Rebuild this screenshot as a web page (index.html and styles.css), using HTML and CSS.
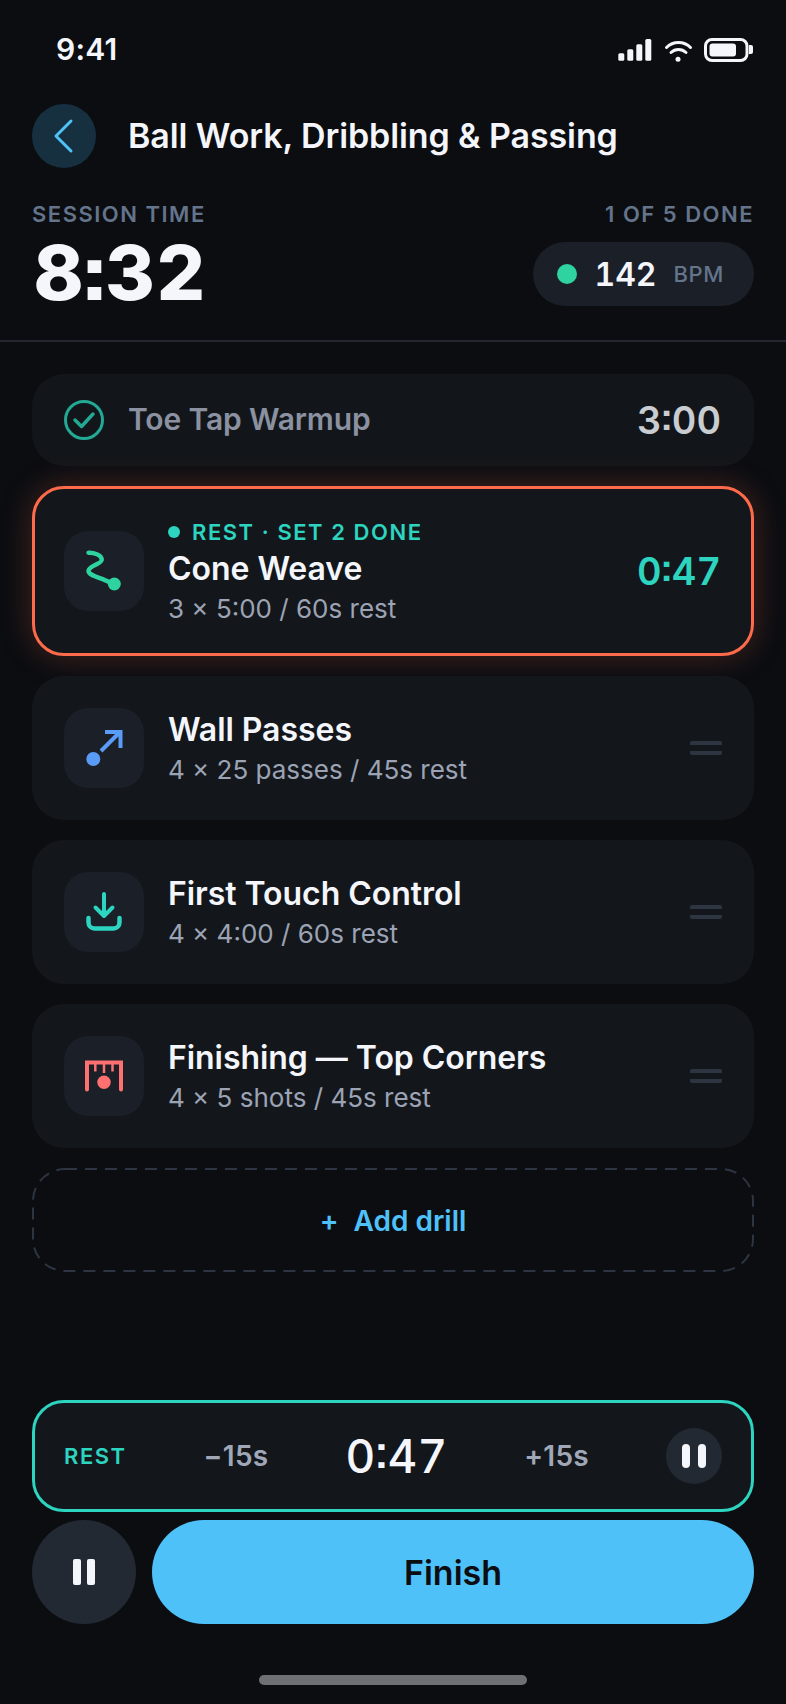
FILE: index.html
```html
<!DOCTYPE html>
<html lang="en">
<head>
<meta charset="utf-8">
<title>Ball Work, Dribbling &amp; Passing</title>
<link rel="stylesheet" href="styles.css">
</head>
<body>
<div class="app">
  <div class="status">
    <span class="clock">9:41</span>
    <svg class="status-icons" width="135" height="24" viewBox="618 38 135 24">
      <rect x="618.3" y="53.3" width="6" height="7.4" rx="1.5" fill="#f4f6fb"/>
      <rect x="627.3" y="49.3" width="6" height="11.4" rx="1.5" fill="#f4f6fb"/>
      <rect x="636.3" y="44.3" width="6" height="16.4" rx="1.5" fill="#f4f6fb"/>
      <rect x="645.3" y="39" width="6" height="21.7" rx="1.5" fill="#f4f6fb"/>
      <path d="M666.5 47.5a17 17 0 0 1 24 0M671 52.5a11 11 0 0 1 15 0" fill="none" stroke="#f4f6fb" stroke-width="3" stroke-linecap="round"/>
      <circle cx="678" cy="59.3" r="2.5" fill="#f4f6fb"/>
      <rect x="705.5" y="39.5" width="41.5" height="21" rx="6.5" fill="none" stroke="#f4f6fb" stroke-width="3"/>
      <rect x="709.5" y="43.5" width="26.5" height="13" rx="3" fill="#f4f6fb"/>
      <path d="M749 45h2a2 2 0 0 1 2 2v5a2 2 0 0 1-2 2h-2z" fill="#f4f6fb"/>
    </svg>
  </div>

  <header class="header">
    <button class="back" aria-label="Back">
      <svg width="64" height="64" viewBox="0 0 64 64"><path d="M39 17 24 32l15 15" fill="none" stroke="#4fc1f9" stroke-width="3" stroke-linecap="round" stroke-linejoin="round"/></svg>
    </button>
    <h1 class="title">Ball Work, Dribbling &amp; Passing</h1>
  </header>

  <section class="stats">
    <div class="stat-col">
      <div class="stat-label">SESSION TIME</div>
      <div class="session-time">8:32</div>
    </div>
    <div class="stat-col stat-right">
      <div class="stat-label">1 OF 5 DONE</div>
      <div class="bpm">
        <span class="bpm-dot"></span>
        <span class="bpm-val">142</span>
        <span class="bpm-unit">BPM</span>
      </div>
    </div>
  </section>

  <main class="list">
    <div class="card done">
      <svg class="check" width="40" height="40" viewBox="0 0 40 40"><circle cx="20" cy="20" r="18.5" fill="none" stroke="#22a893" stroke-width="3"/><path d="m11 20 6.500 6.500L29 14" fill="none" stroke="#22a893" stroke-width="3.500" stroke-linecap="round" stroke-linejoin="round"/></svg>
      <span class="done-name">Toe Tap Warmup</span>
      <span class="done-time">3:00</span>
    </div>

    <div class="card active">
      <div class="icon">
        <svg width="80" height="80" viewBox="0 0 80 80"><path d="M24.500 21.700C29 21.500 38 23.500 37.700 29 37.400 33 24.500 35 24.500 40 24.500 45 38 46.500 46 51.500" fill="none" stroke="#2ed3a0" stroke-width="4.500" stroke-linecap="round"/><circle cx="50.300" cy="53" r="6.500" fill="#2ed3a0"/></svg>
      </div>
      <div class="info">
        <div class="state"><span class="state-dot"></span>REST · SET 2 DONE</div>
        <div class="name">Cone Weave</div>
        <div class="sub">3 × 5:00 / 60s rest</div>
      </div>
      <span class="timer">0:47</span>
    </div>

    <div class="card">
      <div class="icon">
        <svg width="80" height="80" viewBox="0 0 80 80"><circle cx="29.300" cy="51" r="7" fill="#5a9bf6"/><path d="M37 43 56 24M41 24h15.500v16" fill="none" stroke="#5a9bf6" stroke-width="4"/></svg>
      </div>
      <div class="info">
        <div class="name">Wall Passes</div>
        <div class="sub">4 × 25 passes / 45s rest</div>
      </div>
      <span class="handle"></span>
    </div>

    <div class="card">
      <div class="icon">
        <svg width="80" height="80" viewBox="0 0 80 80"><path d="M40 22v21M31.500 35.500 40 44l8.500-8.500" fill="none" stroke="#2dd4bf" stroke-width="4" stroke-linecap="round" stroke-linejoin="round"/><path d="M24.500 46v4.500a6 6 0 0 0 6 6h19a6 6 0 0 0 6-6V46" fill="none" stroke="#2dd4bf" stroke-width="4.500" stroke-linecap="round"/></svg>
      </div>
      <div class="info">
        <div class="name">First Touch Control</div>
        <div class="sub">4 × 4:00 / 60s rest</div>
      </div>
      <span class="handle"></span>
    </div>

    <div class="card">
      <div class="icon">
        <svg width="80" height="80" viewBox="0 0 80 80"><path d="M23 53.500V26.500h34V53.500" fill="none" stroke="#ff7070" stroke-width="4" stroke-linecap="round"/><path d="M31.300 26.500V35.500M40 26.500V37M48.500 26.500V35.500" fill="none" stroke="#ff7070" stroke-width="2.500"/><circle cx="40" cy="46.300" r="6.700" fill="#ff7070"/></svg>
      </div>
      <div class="info">
        <div class="name">Finishing — Top Corners</div>
        <div class="sub">4 × 5 shots / 45s rest</div>
      </div>
      <span class="handle"></span>
    </div>

    <button class="add">
      <svg class="add-outline" width="722" height="104" viewBox="0 0 722 104"><rect x="1" y="1" width="720" height="102" rx="32" fill="none" stroke="#2d3542" stroke-width="2" stroke-dasharray="12 8"/></svg>
      <span class="plus">+</span>Add drill
    </button>
  </main>

  <section class="controls">
    <div class="restbar">
      <span class="rest-label">REST</span>
      <span class="adjust">−15s</span>
      <span class="rest-time">0:47</span>
      <span class="adjust">+15s</span>
      <button class="rest-pause" aria-label="Pause rest"><span class="bar"></span><span class="bar"></span></button>
    </div>
    <div class="actions">
      <button class="pause" aria-label="Pause"><span class="bar"></span><span class="bar"></span></button>
      <button class="finish">Finish</button>
    </div>
  </section>

  <div class="home"><span class="home-bar"></span></div>
</div>
</body>
</html>
```

FILE: styles.css
```css
* { box-sizing: border-box; }
html, body { margin: 0; padding: 0; background: #0b0d11; }
body { font-family: "Inter", "Liberation Sans", sans-serif; color: #f4f6fb; }
button { font-family: inherit; border: 0; padding: 0; margin: 0; }

.app { width: 786px; height: 1704px; display: flex; flex-direction: column; overflow: hidden; }

.status { height: 104px; padding: 29px 33px 0 56px; display: flex; justify-content: space-between; align-items: flex-start; flex: none; }
.clock { font-size: 30px; line-height: 40px; font-weight: 600; letter-spacing: 0.2px; }
.status-icons { margin-top: 9px; }

.header { display: flex; align-items: center; gap: 32px; padding: 0 32px; height: 64px; flex: none; }
.back { width: 64px; height: 64px; border-radius: 50%; background: #16303f; display: block; }
.back svg { display: block; }
.title { margin: 0; font-size: 34px; line-height: 44px; font-weight: 600; letter-spacing: -0.1px; color: #f4f6fb; }

.stats { display: flex; justify-content: space-between; padding: 33px 32px 0; height: 174px; border-bottom: 2px solid #232830; flex: none; margin-bottom: 32px; }
.stat-col { display: flex; flex-direction: column; }
.stat-right { align-items: flex-end; }
.stat-label { font-size: 22px; line-height: 26px; font-weight: 600; letter-spacing: 1.5px; color: #64748b; }
.session-time { font-size: 76px; line-height: 84px; font-weight: 800; letter-spacing: 1.2px; color: #f4f6fb; margin: 3px 0 0 2px; font-feature-settings: "tnum", "ss07"; }

.bpm { margin-top: 15px; height: 64px; padding: 0 30px 0 24px; border-radius: 32px; background: #1a1f28; display: flex; align-items: center; }
.bpm-dot { width: 20px; height: 20px; border-radius: 50%; background: #2ed3a0; margin-right: 17px; }
.bpm-val { font-size: 32px; font-weight: 600; color: #f4f6fb; margin-right: 17px; font-feature-settings: "tnum", "ss07"; }
.bpm-unit { font-size: 22px; font-weight: 500; letter-spacing: 0.6px; color: #64748b; }

.list { padding: 0 32px; display: flex; flex-direction: column; gap: 20px; flex: none; }

.card { height: 144px; background: #13171c; border-radius: 32px; padding: 0 32px; display: flex; align-items: center; }
.done { height: 92px; background: #12161a; }
.check { margin-right: 24px; flex: none; }
.done-name { font-size: 30px; line-height: 40px; font-weight: 600; letter-spacing: -0.15px; color: #8b91a0; flex: 1; margin-top: -2px; }
.done-time { font-size: 38px; font-weight: 600; color: #c9ccd0; margin-right: 1px; font-feature-settings: "tnum", "ss07"; }

.active { height: 170px; padding: 0 29px; border: 3px solid #ff6b4a; box-shadow: 0 0 32px rgba(255, 107, 74, 0.25); }

.icon { width: 80px; height: 80px; border-radius: 24px; background: #1a1f28; flex: none; margin-right: 24px; }
.icon svg { display: block; }
.info { flex: 1; min-width: 0; padding-top: 2px; }
.active .info { padding-top: 3px; }
.state { display: flex; align-items: center; font-size: 22px; line-height: 26px; font-weight: 600; letter-spacing: 1.54px; color: #2dd4bf; margin-bottom: 4px; }
.state-dot { width: 12px; height: 12px; border-radius: 50%; background: #2dd4bf; margin-right: 12px; }
.name { font-size: 32px; line-height: 40px; font-weight: 600; letter-spacing: -0.05px; color: #f4f6fb; }
.sub { font-size: 26px; line-height: 36px; font-weight: 400; color: #9ca3b4; margin-top: 2px; }
.timer { font-size: 38px; font-weight: 600; color: #2dd4bf; margin-right: 1px; font-feature-settings: "tnum", "ss07"; }

.handle { width: 32px; height: 14px; flex: none; border-top: 4px solid #2d3542; border-bottom: 4px solid #2d3542; border-radius: 2px; }

.add { position: relative; height: 104px; padding-top: 2px; background: transparent; color: #4fc1f9; font-size: 28px; font-weight: 600; display: flex; align-items: center; justify-content: center; gap: 15px; }
.add-outline { position: absolute; left: 0; top: 0; }

.controls { margin-top: auto; padding: 0 32px; display: flex; flex-direction: column; gap: 8px; flex: none; }
.restbar { height: 112px; border: 3px solid #2dd4bf; border-radius: 32px; background: #13171c; padding: 0 29px; display: flex; align-items: center; justify-content: space-between; }
.rest-label { font-size: 22px; font-weight: 600; letter-spacing: 1.54px; color: #2dd4bf; }
.adjust { font-size: 28px; font-weight: 600; letter-spacing: 0.3px; color: #a0a8b8; }
.rest-time { font-size: 46px; font-weight: 500; color: #f4f6fb; font-feature-settings: "tnum", "ss07"; }
.rest-pause { width: 56px; height: 56px; border-radius: 50%; background: #232933; display: flex; align-items: center; justify-content: center; gap: 8px; }
.rest-pause .bar { width: 8px; height: 24px; border-radius: 4px; background: #f4f6fb; }

.actions { display: flex; gap: 16px; }
.pause { width: 104px; height: 104px; border-radius: 50%; background: #232933; display: flex; align-items: center; justify-content: center; gap: 6px; flex: none; }
.pause .bar { width: 8px; height: 26px; border-radius: 2px; background: #f4f6fb; }
.finish { flex: 1; height: 104px; border-radius: 52px; background: #4fc1f9; color: #0b0d11; font-size: 34px; font-weight: 600; }

.home { height: 80px; display: flex; justify-content: center; padding-top: 51px; flex: none; }
.home-bar { width: 268px; height: 10px; border-radius: 5px; background: #6f7072; }
```
